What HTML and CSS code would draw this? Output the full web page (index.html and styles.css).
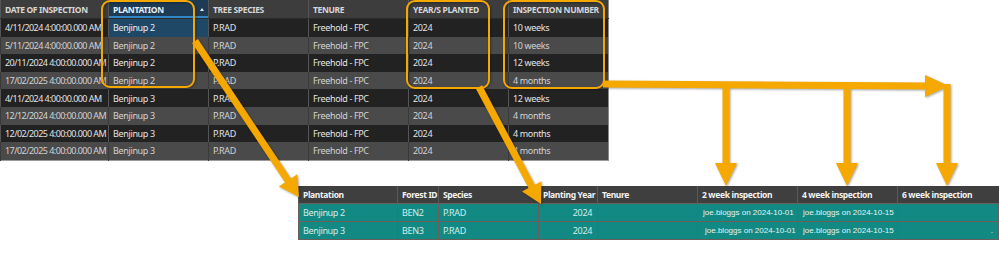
FILE: index.html
```html
<!DOCTYPE html>
<html>
<head>
<meta charset="utf-8">
<link rel="stylesheet" href="styles.css">
</head>
<body>
<div class="canvas">
  <table class="grid-dark">
    <colgroup>
      <col class="c-date"><col class="c100"><col class="c100"><col class="c100"><col class="c100"><col class="c100">
    </colgroup>
    <thead>
      <tr>
        <th>DATE OF INSPECTION</th>
        <th class="sorted">PLANTATION<span class="sort-arrow"></span></th>
        <th>TREE SPECIES</th>
        <th>TENURE</th>
        <th>YEAR/S PLANTED</th>
        <th>INSPECTION NUMBER</th>
      </tr>
    </thead>
    <tbody>
      <tr class="dark"><td class="date">4/11/2024 4:00:00.000 AM</td><td class="selected">Benjinup 2</td><td>P.RAD</td><td>Freehold - FPC</td><td>2024</td><td>10 weeks</td></tr>
      <tr class="light"><td class="date">5/11/2024 4:00:00.000 AM</td><td>Benjinup 2</td><td>P.RAD</td><td>Freehold - FPC</td><td>2024</td><td>10 weeks</td></tr>
      <tr class="dark"><td class="date">20/11/2024 4:00:00.000 AM</td><td>Benjinup 2</td><td>P.RAD</td><td>Freehold - FPC</td><td>2024</td><td>12 weeks</td></tr>
      <tr class="light"><td class="date">17/02/2025 4:00:00.000 AM</td><td>Benjinup 2</td><td>P.RAD</td><td>Freehold - FPC</td><td>2024</td><td>4 months</td></tr>
      <tr class="dark"><td class="date">4/11/2024 4:00:00.000 AM</td><td>Benjinup 3</td><td>P.RAD</td><td>Freehold - FPC</td><td>2024</td><td>12 weeks</td></tr>
      <tr class="light"><td class="date">12/12/2024 4:00:00.000 AM</td><td>Benjinup 3</td><td>P.RAD</td><td>Freehold - FPC</td><td>2024</td><td>4 months</td></tr>
      <tr class="dark"><td class="date">12/02/2025 4:00:00.000 AM</td><td>Benjinup 3</td><td>P.RAD</td><td>Freehold - FPC</td><td>2024</td><td>4 months</td></tr>
      <tr class="light"><td class="date">17/02/2025 4:00:00.000 AM</td><td>Benjinup 3</td><td>P.RAD</td><td>Freehold - FPC</td><td>2024</td><td>4 months</td></tr>
    </tbody>
  </table>

  <table class="grid-teal">
    <colgroup>
      <col class="t-plant"><col class="t-forest"><col class="t-species"><col class="t-year"><col class="t-tenure"><col class="t-insp"><col class="t-insp"><col class="t-insp6">
    </colgroup>
    <thead>
      <tr>
        <th>Plantation</th><th>Forest ID</th><th>Species</th><th>Planting Year</th><th>Tenure</th><th>2 week inspection</th><th>4 week inspection</th><th>6 week inspection</th>
      </tr>
    </thead>
    <tbody>
      <tr><td>Benjinup 2</td><td>BEN2</td><td>P.RAD</td><td class="num">2024</td><td></td><td class="insp">joe.bloggs on 2024-10-01</td><td class="insp">joe.bloggs on 2024-10-15</td><td class="insp"></td></tr>
      <tr><td>Benjinup 3</td><td>BEN3</td><td>P.RAD</td><td class="num">2024</td><td></td><td class="insp insp-shift">joe.bloggs on 2024-10-01</td><td class="insp">joe.bloggs on 2024-10-15</td><td class="insp num">.</td></tr>
    </tbody>
  </table>

  <svg class="overlay" width="999" height="261" viewBox="0 0 999 261">
    <g class="marks">
      <rect x="102" y="1" width="92" height="86" rx="8" class="box"/>
      <rect x="407" y="1" width="82" height="87" rx="8" class="box"/>
      <rect x="504" y="1" width="100" height="87" rx="8" class="box"/>

      <line x1="195" y1="41" x2="289" y2="182" class="shaft"/>
      <polygon points="299,197 278.8,186.4 297.2,174.2" class="head"/>

      <line x1="479" y1="87" x2="532" y2="187" class="shaft"/>
      <polygon points="541,204 522,191.4 541.4,181.2" class="head"/>

      <line x1="603" y1="84" x2="928" y2="86" class="shaft"/>
      <polygon points="925,75 949,86 925,97" class="head"/>

      <line x1="726" y1="86" x2="726" y2="165" class="shaft"/>
      <polygon points="715,163 737,163 726,186" class="head"/>
      <line x1="847" y1="86" x2="847" y2="165" class="shaft"/>
      <polygon points="836,163 858,163 847,186" class="head"/>
      <line x1="947" y1="84" x2="947" y2="165" class="shaft"/>
      <polygon points="936,163 958,163 947,186" class="head"/>
    </g>
  </svg>
</div>
</body>
</html>
```
FILE: styles.css
```css
html, body {
  margin: 0;
  padding: 0;
  background: #ffffff;
}

.canvas {
  position: relative;
  width: 999px;
  height: 261px;
  overflow: hidden;
  font-family: "Noto Sans", "Open Sans", sans-serif;
}

/* ---------- top dark grid ---------- */
.grid-dark {
  border-collapse: collapse;
  table-layout: fixed;
  width: 608px;
  border-bottom: 1px solid #9a9a9a;
  border-right: 1px solid #8a8a8a;
}

.c-date { width: 108px; }
.c100 { width: 100px; }

.grid-dark th {
  height: 18px;
  padding: 0 0 0 4px;
  background: #3d3d3d;
  color: #d6d6d6;
  font-size: 8.5px;
  font-weight: 700;
  letter-spacing: -0.35px;
  text-align: left;
  white-space: nowrap;
  overflow: hidden;
  border-left: 1px solid #555;
  border-bottom: 1px solid #2c2c2c;
}

.grid-dark th.sorted {
  position: relative;
  background: #1d3b55;
  color: #e6eef5;
  box-shadow: inset 0 -2px 0 #2f86c8;
}

.sort-arrow {
  position: absolute;
  right: 4px;
  top: 8px;
  width: 0;
  height: 0;
  border-left: 2.5px solid transparent;
  border-right: 2.5px solid transparent;
  border-bottom: 3px solid #e8e8e8;
}

.grid-dark td {
  height: 17.6px;
  padding: 0 0 0 4px;
  font-size: 9px;
  letter-spacing: -0.35px;
  white-space: nowrap;
  overflow: hidden;
  border-left: 1px solid #555;
}

.grid-dark td.date {
  letter-spacing: -0.55px;
}

.grid-dark tr.dark td {
  background: #222222;
  color: #e2e2e2;
}

.grid-dark tr.light td {
  background: #4a4a4a;
  color: #d2d2d2;
  border-left-color: #3a3a3a;
}

.grid-dark td.selected {
  background: #1f4766 !important;
  color: #e8eef3 !important;
}

/* ---------- bottom teal grid ---------- */
.grid-teal {
  border-collapse: collapse;
  table-layout: fixed;
  width: 700px;
  margin: 25px 0 0 298px;
}

.t-plant { width: 99px; }
.t-forest { width: 41px; }
.t-species { width: 100px; }
.t-year { width: 59px; }
.t-tenure { width: 100px; }
.t-insp { width: 100px; }
.t-insp6 { width: 101px; }

.grid-teal th {
  height: 17px;
  padding: 0 0 0 4px;
  background: #3f3f3f;
  color: #f2f2f2;
  font-size: 8.5px;
  font-weight: 700;
  letter-spacing: -0.35px;
  text-align: left;
  white-space: nowrap;
  overflow: hidden;
  border-left: 1px solid #5a5a5a;
}

.grid-teal td {
  height: 17px;
  padding: 0 0 0 4px;
  background: #128a83;
  color: #d4ecea;
  font-size: 9px;
  letter-spacing: -0.35px;
  white-space: nowrap;
  overflow: hidden;
  border: 1px solid #6b5f5b;
}

.grid-teal td.num {
  text-align: right;
  padding: 0 5px 0 0;
}

.grid-teal td.insp {
  font-family: "Liberation Sans", Arial, sans-serif;
  font-size: 8px;
  letter-spacing: 0;
  padding-left: 5px;
  color: #e4f3f2;
}

.grid-teal td.insp-shift {
  padding-left: 7px;
}

/* ---------- annotation overlay ---------- */
.overlay {
  position: absolute;
  left: 0;
  top: 0;
  pointer-events: none;
}

.marks {
  filter: drop-shadow(1px 1.5px 1px rgba(0, 0, 0, 0.35));
}

.box {
  fill: none;
  stroke: #f5a800;
  stroke-width: 2;
}

.shaft {
  stroke: #f5a800;
  stroke-width: 7;
  stroke-linecap: butt;
}

.head {
  fill: #f5a800;
}
```
